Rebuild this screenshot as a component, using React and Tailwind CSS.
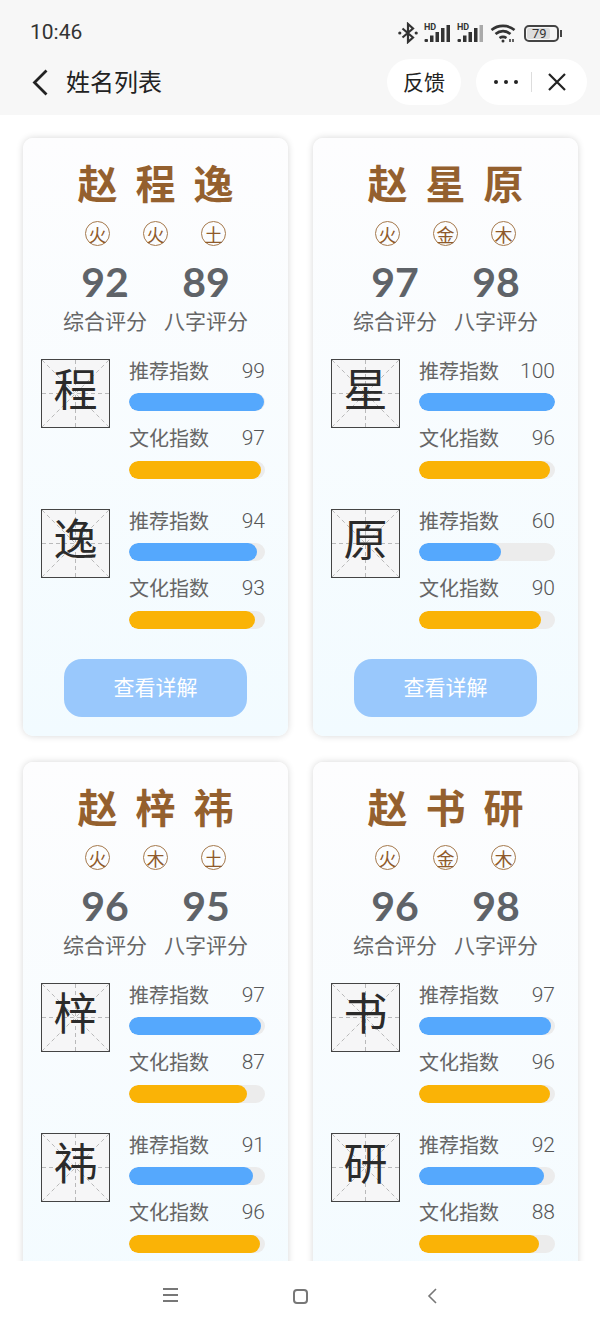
import React from 'react';

const cards = [
  { name: ['赵', '程', '逸'], wuxing: ['火', '火', '土'], total: 92, bazi: 89, chars: [
    { ch: '程', tuijian: 99, wenhua: 97 }, { ch: '逸', tuijian: 94, wenhua: 93 },
  ] },
  { name: ['赵', '星', '原'], wuxing: ['火', '金', '木'], total: 97, bazi: 98, chars: [
    { ch: '星', tuijian: 100, wenhua: 96 }, { ch: '原', tuijian: 60, wenhua: 90 },
  ] },
  { name: ['赵', '梓', '祎'], wuxing: ['火', '木', '土'], total: 96, bazi: 95, chars: [
    { ch: '梓', tuijian: 97, wenhua: 87 }, { ch: '祎', tuijian: 91, wenhua: 96 },
  ] },
  { name: ['赵', '书', '研'], wuxing: ['火', '金', '木'], total: 96, bazi: 98, chars: [
    { ch: '书', tuijian: 97, wenhua: 96 }, { ch: '研', tuijian: 92, wenhua: 88 },
  ] },
];

const BluetoothIcon = () => (
  <svg width="20" height="22" viewBox="0 0 20 22" fill="none" stroke="#333" strokeWidth="2.2">
    <path d="M4.5 6.5L15 15.5L10 20V2L15 6.5L4.5 15.5" />
    <circle cx="1.8" cy="11" r="1.6" fill="#333" stroke="none" />
    <circle cx="18.2" cy="11" r="1.6" fill="#333" stroke="none" />
  </svg>
);

// Signal bars with the small HD mark above them.
const Signal = ({ lastDim }) => (
  <div className="relative h-[20px] w-[27px]">
    <span className="absolute left-0 top-0 text-[9px] font-bold leading-[9px] text-[#333] [font-family:'Roboto',sans-serif]">HD</span>
    <svg width="27" height="20" viewBox="0 0 27 20" className="absolute left-0 top-0">
      <rect x="0.5" y="16" width="3.5" height="3" rx="1" fill="#333" />
      <rect x="6" y="12.5" width="3.5" height="6.5" fill="#333" />
      <rect x="11.5" y="9" width="3.5" height="10" fill="#333" />
      <rect x="17" y="5" width="3.5" height="14" fill="#333" />
      <rect x="22.5" y="2" width="3.5" height="17" fill={lastDim ? '#aaa' : '#333'} />
    </svg>
  </div>
);

const Wifi = () => (
  <svg width="26" height="20" viewBox="0 0 26 20" fill="none" stroke="#333" strokeWidth="2.6">
    <path d="M1.5 7c6.500-5.500 16.500-5.500 23 0" />
    <path d="M5.500 11c4.500-3.800 10.500-3.800 15 0" />
    <path d="M9.500 15c2.300-1.500 4.700-1.500 7 0" />
    <circle cx="13" cy="18" r="1.500" fill="#333" stroke="none" />
    <path d="M20 19v-3M23 19v-3" strokeWidth="1.500" />
  </svg>
);

const Bar = ({ label, value, color, className, gap }) => (
  <div className={className}>
    <div className="flex h-6 items-center justify-between text-[20px] leading-6 text-[#666]">
      <span>{label}</span>
      <span className="text-[21px] font-light text-[#555] [font-family:'Roboto',sans-serif]">{value}</span>
    </div>
    <div className={`${gap} h-[18px] w-[136px] overflow-hidden rounded-full bg-[#ececec]`}>
      <div className={`h-full rounded-full ${color}`} style={{ width: `${value}%` }} />
    </div>
  </div>
);

// Practice-grid box that holds one character.
const CharBox = ({ ch }) => (
  <div className="relative h-[69px] w-[69px] shrink-0 border border-[#444] bg-[#f6f6f7]">
    <svg width="67" height="67" viewBox="0 0 67 67" fill="none" stroke="#aaa" strokeWidth="0.8" strokeDasharray="4 3">
      <path d="M0 0L67 67M67 0L0 67M33.5 0V67M0 33.5H67" />
    </svg>
    <span className="absolute inset-0 flex items-center justify-center pb-[14px] text-[44px] leading-none text-[#2b2b2b]">{ch}</span>
  </div>
);

const Card = ({ card }) => (
  <div className="flex h-[598px] flex-col rounded-[10px] bg-gradient-to-b from-[#fdfdfe] to-[#f2fbff] px-[18px] pb-[19px] pt-6 shadow-[0_0_7px_rgba(0,0,0,0.16)]">
    <div className="flex h-[46px] justify-center gap-[18px] text-[40px] font-bold leading-[40px] text-[#94602e]">
      {card.name.map((c, i) => <span key={i}>{c}</span>)}
    </div>
    <div className="mt-[13px] flex justify-center gap-[33px]">
      {card.wuxing.map((w, i) => (
        <span key={i} className="flex h-[25px] w-[25px] items-center justify-center rounded-full border border-[#a5794c] text-[18px] leading-none text-[#8f5a2a]">{w}</span>
      ))}
    </div>
    <div className="mt-[17px] flex justify-center gap-[18px]">
      {[[card.total, '综合评分'], [card.bazi, '八字评分']].map(([num, label]) => (
        <div key={label} className="flex w-[83px] flex-col items-center">
          <span className="h-[38px] text-[41px] font-bold leading-[38px] text-[#5f6368] [font-family:'Lato',sans-serif]">{num}</span>
          <span className="mt-[5px] whitespace-nowrap text-[21px] leading-7 text-[#666]">{label}</span>
        </div>
      ))}
    </div>
    <div className="mt-[25px] flex flex-col gap-[30px]">
      {card.chars.map((c) => (
        <div key={c.ch} className="flex gap-[19px]">
          <CharBox ch={c.ch} />
          <div className="w-[136px]">
            <Bar label="推荐指数" value={c.tuijian} color="bg-[#55a8fd]" gap="mt-[10px]" />
            <Bar label="文化指数" value={c.wenhua} color="bg-[#fab306]" gap="mt-[11px]" className="mt-[15px]" />
          </div>
        </div>
      ))}
    </div>
    <button className="mx-auto mt-[30px] h-[58px] w-[183px] rounded-[18px] bg-[#99c8fc] pb-[2px] text-[21px] text-white">查看详解</button>
  </div>
);

export default function App() {
  return (
    <div className="flex h-[1333px] w-[600px] flex-col overflow-hidden bg-white [font-family:'Noto_Sans_CJK_SC',sans-serif]">
      <header className="h-[115px] shrink-0 bg-[#f7f7f7]">
        <div className="flex h-[59px] items-start justify-between pl-[30px] pr-[38px] pt-[19px]">
          <span className="text-[21px] leading-[26px] text-[#333] [font-family:'Roboto',sans-serif]">10:46</span>
          <div className="flex items-center gap-[6px] pt-[3px]">
            <BluetoothIcon />
            <Signal />
            <Signal lastDim />
            <Wifi />
            <div className="ml-[2px] flex items-center">
              <div className="h-[17px] w-[35px] rounded-[5px] border-2 border-[#444] p-px">
                <div className="flex h-full w-[79%] items-center rounded-[2px] bg-[#ddd] pl-[5px] text-[13px] leading-none text-[#333] [font-family:'Roboto',sans-serif]">
                  79
                </div>
              </div>
              <div className="ml-px h-[7px] w-[2px] bg-[#444]" />
            </div>
          </div>
        </div>
        <div className="flex h-[46px] items-center pl-[32px] pr-[13px]">
          <svg width="16" height="27" viewBox="0 0 16 27" fill="none" stroke="#222" strokeWidth="2.8">
            <path d="M14.500 1.500L2.500 13.500L14.500 25.500" />
          </svg>
          <span className="ml-[18px] pb-[2px] text-[24px] leading-none text-[#222]">姓名列表</span>
          <div className="ml-auto flex h-[46px] w-[74px] items-center justify-center rounded-full bg-white text-[21px] text-[#222]">反馈</div>
          <div className="ml-[15px] flex h-[46px] w-[111px] items-center rounded-full bg-white pl-[18px]">
            <div className="flex w-[24px] justify-between">
              <span className="h-[4px] w-[4px] rounded-full bg-[#222]" />
              <span className="h-[4px] w-[4px] rounded-full bg-[#222]" />
              <span className="h-[4px] w-[4px] rounded-full bg-[#222]" />
            </div>
            <div className="ml-[13px] h-[20px] w-px bg-[#ddd]" />
            <svg width="18" height="18" viewBox="0 0 18 18" fill="none" stroke="#222" strokeWidth="2.2" className="ml-[16px]">
              <path d="M1 1L17 17M17 1L1 17" />
            </svg>
          </div>
        </div>
      </header>
      <main className="grid flex-1 grid-cols-[265px_265px] content-start gap-x-[25px] gap-y-[26px] overflow-hidden px-[23px] pt-[23px]">
        {cards.map((card) => <Card key={card.name.join('')} card={card} />)}
      </main>
      <nav className="flex h-[72px] shrink-0 items-start bg-white pt-[27px]">
        <div className="ml-[163px] flex h-[14px] w-[15px] flex-col justify-between">
          <span className="h-[2px] bg-[#777]" />
          <span className="h-[2px] bg-[#777]" />
          <span className="h-[2px] bg-[#777]" />
        </div>
        <div className="ml-[115px] mt-[1px] h-[15px] w-[15px] rounded-[4px] border-2 border-[#777]" />
        <svg width="10" height="16" viewBox="0 0 10 16" fill="none" stroke="#777" strokeWidth="1.6" className="ml-[119px]">
          <path d="M9 1L2 8l7 7" />
        </svg>
      </nav>
    </div>
  );
}
